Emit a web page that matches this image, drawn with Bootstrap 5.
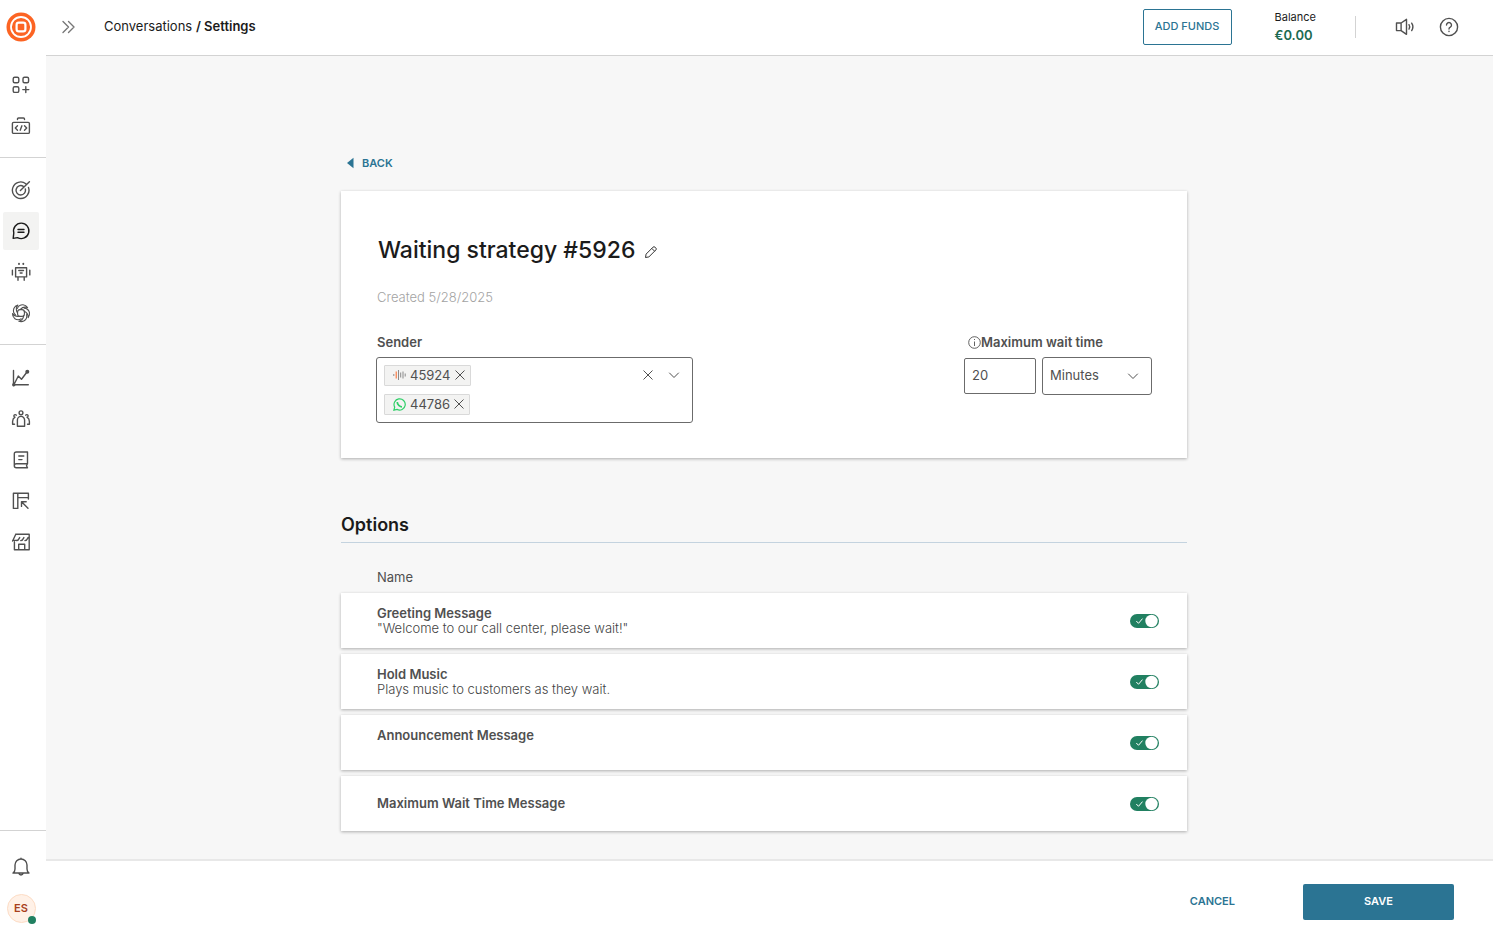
<!DOCTYPE html>
<html lang="en">
<head>
<meta charset="utf-8">
<meta name="viewport" content="width=device-width, initial-scale=1">
<title>Conversations / Settings</title>
<link href="https://cdn.jsdelivr.net/npm/bootstrap@5.3.0/dist/css/bootstrap.min.css" rel="stylesheet">
<style>
  :root { --ink: #1b1b1b; --text: #505050; --line: #d3d3d3; --blue: #2b7493; --green: #218061; --field: #6b6b6b; }
  body { font-family: Inter, sans-serif; font-size: 13px; line-height: 15px; color: var(--text); background: #fff; }
  a { text-decoration: none; }
  svg { display: block; flex: none; }
  .ico { width: 20px; height: 20px; fill: none; stroke: var(--text); stroke-width: 1.4; stroke-linecap: round; stroke-linejoin: round; }
  .plain { border: 0; background: none; padding: 0; }

  .side { flex: 0 0 46px; padding-right: 4px; }
  .side-logo { height: 53px; }
  .side-group { display: flex; flex-direction: column; align-items: center; gap: 3px; padding: 13px 0 12px; margin-right: -4px; padding-right: 4px; }
  .side-group + .side-group, .side-foot { border-top: 1px solid var(--line); }
  .side-group:last-child { padding-top: 14px; }
  .side-foot { margin-right: -4px; padding: 17px 4px 14px 0; }
  .side-item { display: flex; align-items: center; justify-content: center; width: 36px; height: 38px; border-radius: 2px; }
  .side-item.active { background: #f3f3f2; }
  .side-item.active .ico { stroke: var(--ink); }
  .avatar { position: relative; width: 29px; height: 29px; border: 1px solid #fddcc5; border-radius: 50%; background: #fff1e7; color: #a8401c; font-size: 11px; font-weight: 600; }
  .presence { position: absolute; right: -1px; bottom: -2px; width: 8px; height: 8px; border-radius: 50%; background: var(--green); }

  .topbar { height: 56px; border-bottom: 1px solid var(--line); padding: 0 34px 2px 13px; color: var(--ink); }
  .crumbs { margin-left: 25px; }
  .crumb-link { color: var(--ink); }
  .btn-funds { width: 89px; height: 36px; padding: 0 0 2px; border: 1px solid var(--blue); border-radius: 2px; color: var(--blue); font-size: 11px; font-weight: 500; line-height: 16px; }
  .balance { margin-left: 43px; padding-bottom: 2px; font-size: 11px; line-height: 18px; }
  .balance-sum { font-size: 13px; font-weight: 600; color: #1c6b52; }
  .divider { width: 1px; height: 22px; margin: 0 39px; background: var(--line); }

  .stage { background: #f7f7f7; padding: 99px 11px 28px 0; }
  .column { width: 100%; max-width: 846px; margin: 0 auto; }
  .back { color: var(--blue); font-size: 11px; font-weight: 600; line-height: 16px; padding-left: 6px; gap: 8px; margin-bottom: 20px; }
  .panel { background: #fff; box-shadow: 0 1px 3px rgba(0,0,0,.3); }
  .strategy { padding: 44px 35px 35px; margin-bottom: 56px; }
  .strategy h1 { font-size: 23px; line-height: 30px; font-weight: 500; color: var(--ink); margin: 0; }
  .strategy-name { padding-left: 2px; gap: 9px; }
  .created { color: #a3a3a3; font-weight: 300; margin: 25px 0 30px; padding-left: 1px; }
  .field-label { font-weight: 600; margin-bottom: 7px; padding-left: 1px; display: flex; align-items: center; height: 15px; }
  .wait-label { padding-left: 4px; }
  .sender { width: 317px; min-height: 66px; padding: 7px; border: 1px solid var(--field); border-radius: 3px; }
  .sender-tools { gap: 14px; padding: 4px 5px 0 0; }
  .chip { height: 21px; padding: 0 4px 1px 8px; border: 1px solid #d9d9d9; background: #f3f3f2; gap: 4px; border-radius: 1px; }
  .chip .plain { margin-left: -1px; }
  .num { width: 72px; height: 36px; padding: 0 7px 2px; border: 1px solid var(--field); border-radius: 2px; color: var(--text); font-size: 13px; }
  .wait-fields { gap: 6px; }
  .unit { width: 110px; height: 38px; padding: 0 7px 2px; border: 1px solid var(--field); border-radius: 3px; color: var(--text); font-size: 13px; line-height: 15px;
    background-image: url("data:image/svg+xml,%3Csvg xmlns='http://www.w3.org/2000/svg' viewBox='0 0 12 12'%3E%3Cpath d='M1.5 4l4.500 4.500L10.500 4' fill='none' stroke='%23505050' stroke-linecap='round'/%3E%3C/svg%3E");
    background-size: 12px 12px; background-position: right 12px center; }

  .options-title { font-size: 18px; line-height: 22px; font-weight: 600; color: var(--ink); margin: 0; padding-bottom: 6px; border-bottom: 1px solid #c4d3df; }
  .list-name { margin: 27px 0 8px; padding-left: 36px; }
  .options-list { display: grid; gap: 6px; }
  .option { height: 55px; padding: 0 28px 0 36px; }
  .option-title { font-weight: 600; display: block; }
  .option-note { min-height: 15px; font-weight: 300; color: #444; }
  .toggle { appearance: none; width: 29px; height: 14px; margin: 0; border-radius: 7px; background: #b5b5b5; }
  .toggle:checked { background: var(--green) url("data:image/svg+xml,%3Csvg xmlns='http://www.w3.org/2000/svg' viewBox='0 0 29 14'%3E%3Ccircle cx='21.500' cy='7' r='6.200' fill='white'/%3E%3Cpath d='M6.300 7l2.200 2.300L12.500 4.600' fill='none' stroke='white'/%3E%3C/svg%3E"); }

  .actions { height: 78px; border-top: 2px solid #e8e8e8; padding: 5px 39px 0 0; gap: 67px; }
  .actions .btn { font-size: 11px; line-height: 16px; font-weight: 600; padding: 0 0 2px; }
  .btn-cancel { color: var(--blue); }
  .btn-save { width: 151px; height: 36px; border-radius: 2px; background: var(--blue); color: #fff; }
</style>
</head>
<body>
<div class="d-flex min-vh-100">
  <aside class="side d-flex flex-column">
    <a href="#" class="side-logo d-flex align-items-center justify-content-center" aria-label="Home">
      <svg width="30" height="30" viewBox="0 0 30 30"><circle cx="15" cy="15" r="14.500" fill="#fc6423"/><g fill="none" stroke="#fff" stroke-width="1.800"><circle cx="15" cy="15" r="10"/><rect x="10.600" y="10.600" width="8.800" height="8.800" rx="2.200" stroke-width="2.200"/></g></svg>
    </a>
    <nav class="flex-grow-1" aria-label="Main">
      <div class="side-group">
        <a href="#" class="side-item" aria-label="Apps"><svg class="ico" viewBox="0 0 20 20"><rect x="2.200" y="2.200" width="5.600" height="5.600" rx="1.500"/><rect x="12" y="2.200" width="5.600" height="5.600" rx="1.500"/><rect x="2.200" y="11.800" width="5.600" height="5.600" rx="1.500"/><path d="M14.800 11.600v6M11.800 14.600h6"/></svg></a>
        <a href="#" class="side-item" aria-label="Developer tools"><svg class="ico" viewBox="0 0 20 20"><rect x="1.400" y="6.400" width="17" height="11" rx="1.200"/><path d="M6.500 3.600V3q0-1 1-1h5q1 0 1 1v.6M6.500 9.800L4.300 12l2.200 2.200M13.500 9.800l2.200 2.200-2.200 2.200M10.900 9.800l-1.700 4.400"/></svg></a>
      </div>
      <div class="side-group">
        <a href="#" class="side-item" aria-label="Moments"><svg class="ico" viewBox="0 0 20 20"><path d="M14.800 3.700a8.300 8.300 0 1 0 2.700 3.700M12.300 6.300a4.700 4.700 0 1 0 2 2.700M9.400 10.600L18.400 1.700"/></svg></a>
        <a href="#" class="side-item active" aria-label="Conversations"><svg class="ico" viewBox="0 0 20 20"><path d="M2.200 17.400l.6-5.500A7.700 7.700 0 1 1 6.500 16.600L2.200 17.400zM7 8.500h6M7 11.300h6"/></svg></a>
        <a href="#" class="side-item" aria-label="Answers"><svg class="ico" viewBox="0 0 20 20" stroke-linecap="butt"><path d="M4.600 5.700h11v9.200h-11zM7.800 8.500h4.700M9.200 11h1.900M7 15v3.300M13.200 15v3.300M1.400 8.300v4.600M18.800 8.300v4.600"/><path d="M8 1.800v.3M12.300 1.800v.3" stroke-width="1.900"/></svg></a>
        <a href="#" class="side-item" aria-label="AI hub"><svg class="ico" viewBox="0 0 20 20"><defs><path id="blade" d="M6.400 5.400Q8 1.700 12 1.800 15 2.200 16.600 4.600 12.500 3 9.300 6.300"/></defs><g style="stroke-width:1.100"><rect x="6.600" y="6.600" width="6.800" height="6.800" rx="2.400"/><use href="#blade"/><use href="#blade" transform="rotate(72 10 10)"/><use href="#blade" transform="rotate(144 10 10)"/><use href="#blade" transform="rotate(216 10 10)"/><use href="#blade" transform="rotate(288 10 10)"/></g></svg></a>
      </div>
      <div class="side-group">
        <a href="#" class="side-item" aria-label="Analyze"><svg class="ico" viewBox="0 0 20 20"><path d="M2.500 2.500v14.200h14.800M3 16.500L7.300 8l3.200 3.200 5.700-7.400"/><circle cx="16.300" cy="3.700" r="1.300" fill="#505050"/><circle cx="2.800" cy="16.700" r="1" fill="#505050"/></svg></a>
        <a href="#" class="side-item" aria-label="People"><svg class="ico" viewBox="0 0 20 20"><circle cx="10" cy="3.800" r="1.900"/><path d="M6.400 17.300v-6.300a3.600 3.600 0 0 1 7.200 0v6.300z"/><path d="M5.300 6.200a1.300 1.300 0 1 0-1.300 2Q1.600 9.500 1.600 12.500v2.800h1.900M14.700 6.200a1.300 1.300 0 1 1 1.300 2q2.400 1.300 2.400 4.300v2.800h-1.900"/></svg></a>
        <a href="#" class="side-item" aria-label="Content"><svg class="ico" viewBox="0 0 20 20"><path d="M3.300 15.800V4q0-2 2-2h11.200v11.800H5.300a2 2 0 0 0 0 4h11.200M16.500 13.800l-1 2 1 2M7.800 6h5M7.800 9.600h3.200"/></svg></a>
        <a href="#" class="side-item" aria-label="Layouts"><svg class="ico" viewBox="0 0 20 20"><path d="M17.400 8V2.200H2.400v15.200h4.400V2.200M6.800 6.600h10.600M17 17.200l-6.200-6.200M10.500 15.400V10.700h4.700"/></svg></a>
        <a href="#" class="side-item" aria-label="Exchange"><svg class="ico" viewBox="0 0 20 20"><path d="M4.800 2.300h13.400v15.400H3.400v-8M1.600 9l3.200-6.700M5.700 8.400h-4M5.500 8.600q1.800 0 3.200-3M9.700 8.600q1.800 0 3.200-3M13.900 8.600q1.800 0 3.200-3M7.700 17.500v-5.300h6v5.300"/></svg></a>
      </div>
    </nav>
    <div class="side-foot d-flex flex-column align-items-center">
      <button type="button" class="side-item plain mb-2" aria-label="Notifications"><svg class="ico" viewBox="0 0 20 20"><path d="M2 16h16q-2-1.500-2-4V8A6 6 0 0 0 4 8v4q0 2.500-2 4zM7.800 16.300a2.300 2.300 0 0 0 4.400 0M10 1.200v.8"/></svg></button>
      <button type="button" class="avatar p-0">ES<span class="presence"></span></button>
    </div>
  </aside>

  <div class="d-flex flex-column flex-grow-1">
    <header class="topbar d-flex align-items-center">
      <button type="button" class="plain" aria-label="Expand menu"><svg class="ico" viewBox="0 0 20 20"><path d="M4 4.500l5.500 5.500L4 15.500M9.500 4.500l5.500 5.500-5.500 5.500" stroke="#777"/></svg></button>
      <div class="crumbs"><a href="#" class="crumb-link">Conversations</a> <strong class="fw-semibold">/ Settings</strong></div>
      <button type="button" class="btn btn-funds ms-auto">ADD FUNDS</button>
      <div class="balance">Balance<div class="balance-sum">€0.00</div></div>
      <div class="divider"></div>
      <button type="button" class="plain me-4" aria-label="Announcements"><svg class="ico" viewBox="0 0 20 20"><path d="M1.500 6h4.600v7.600H1.500zM6.100 6l5.400-3.700v15L6.100 13.600M14 7.700q1.400 2.200 0 4.400M16.700 6.200q2.400 3.700 0 7.400"/></svg></button>
      <button type="button" class="plain" aria-label="Help"><svg class="ico" viewBox="0 0 20 20"><circle cx="10" cy="10" r="8.600"/><path d="M7.500 8a2.500 2.500 0 1 1 3.800 2.100q-1.300.7-1.300 2M10 14.300v.2"/></svg></button>
    </header>

    <main class="stage flex-grow-1">
      <div class="column">
        <a href="#" class="back d-inline-flex align-items-center"><svg width="7" height="12" viewBox="0 0 7 12"><path d="M6.500.8v10.400L0 6z" fill="#2b7493"/></svg>BACK</a>

        <section class="panel strategy">
          <div class="strategy-name d-flex align-items-center">
            <h1>Waiting strategy #5926</h1>
            <button type="button" class="plain pt-1" aria-label="Edit name"><svg width="14" height="14" viewBox="0 0 14 14" fill="none" stroke="#333" stroke-linejoin="round"><path d="M1.500 12.500l.6-3.400 7-7q.9-.9 1.800 0l1 1q.9.900 0 1.800l-7 7zM7.800 3.400l2.800 2.800"/></svg></button>
          </div>
          <p class="created">Created 5/28/2025</p>
          <div class="d-flex justify-content-between align-items-start flex-wrap">
            <div role="group" aria-labelledby="senderLabel">
              <div class="field-label" id="senderLabel">Sender</div>
              <div class="sender d-flex align-items-start">
                <div class="d-flex flex-column align-items-start gap-2">
                  <div class="chip d-flex align-items-center">
                    <svg width="13" height="12" viewBox="0 0 13 12" fill="none" stroke="#8a8a8a"><path d="M.8 5v2M5.500 1v10M7.700 3.500v5M10 2.500v7M12.200 4.500v3"/><path d="M3.200 2.500v7" stroke="#fc6423"/></svg>
                    45924
                    <button type="button" class="plain" aria-label="Remove 45924"><svg width="12" height="12" viewBox="0 0 12 12" stroke="#505050"><path d="M1.500 1.500l9 9M10.500 1.500l-9 9"/></svg></button>
                  </div>
                  <div class="chip d-flex align-items-center">
                    <svg width="13" height="13" viewBox="0 0 13 13" fill="none" stroke="#2fcf68" stroke-width="1.200"><path d="M.9 12.100l.8-3A5.600 5.600 0 1 1 4 11.400z"/><path d="M4.300 4q-.2 1.700 1.500 3.300T9 8.900" stroke-width="1.700"/></svg>
                    44786
                    <button type="button" class="plain" aria-label="Remove 44786"><svg width="12" height="12" viewBox="0 0 12 12" stroke="#505050"><path d="M1.500 1.500l9 9M10.500 1.500l-9 9"/></svg></button>
                  </div>
                </div>
                <div class="sender-tools d-flex ms-auto">
                  <button type="button" class="plain" aria-label="Clear senders"><svg width="12" height="12" viewBox="0 0 12 12" stroke="#505050"><path d="M1.500 1.500l9 9M10.500 1.500l-9 9"/></svg></button>
                  <button type="button" class="plain" aria-label="Show senders"><svg width="12" height="12" viewBox="0 0 12 12" fill="none" stroke="#505050" stroke-linecap="round"><path d="M1.500 4L6 8.500 10.500 4"/></svg></button>
                </div>
              </div>
            </div>
            <div>
              <label class="field-label wait-label" for="waitTime"><svg width="13" height="13" viewBox="0 0 13 13" fill="none" stroke="#505050" stroke-width=".9"><circle cx="6.500" cy="6.500" r="5.800"/><path d="M6.500 5.500v4.500M6.500 3v1"/></svg>Maximum wait time</label>
              <div class="wait-fields d-flex align-items-center">
                <input class="num" id="waitTime" type="text" inputmode="numeric" value="20">
                <select class="form-select unit" aria-label="Wait time unit"><option>Minutes</option></select>
              </div>
            </div>
          </div>
        </section>

        <h2 class="options-title">Options</h2>
        <div class="list-name">Name</div>
        <div class="options-list">
          <div class="option panel d-flex align-items-center justify-content-between">
            <div><label class="option-title" for="opt1">Greeting Message</label><div class="option-note">"Welcome to our call center, please wait!"</div></div>
            <input class="toggle" type="checkbox" role="switch" id="opt1" checked>
          </div>
          <div class="option panel d-flex align-items-center justify-content-between">
            <div><label class="option-title" for="opt2">Hold Music</label><div class="option-note">Plays music to customers as they wait.</div></div>
            <input class="toggle" type="checkbox" role="switch" id="opt2" checked>
          </div>
          <div class="option panel d-flex align-items-center justify-content-between">
            <div><label class="option-title" for="opt3">Announcement Message</label><div class="option-note"></div></div>
            <input class="toggle" type="checkbox" role="switch" id="opt3" checked>
          </div>
          <div class="option panel d-flex align-items-center justify-content-between">
            <label class="option-title" for="opt4">Maximum Wait Time Message</label>
            <input class="toggle" type="checkbox" role="switch" id="opt4" checked>
          </div>
        </div>
      </div>
    </main>

    <footer class="actions d-flex align-items-center justify-content-end">
      <button type="button" class="btn btn-cancel">CANCEL</button>
      <button type="button" class="btn btn-save">SAVE</button>
    </footer>
  </div>
</div>
<script src="https://cdn.jsdelivr.net/npm/bootstrap@5.3.0/dist/js/bootstrap.bundle.min.js"></script>
</body>
</html>
